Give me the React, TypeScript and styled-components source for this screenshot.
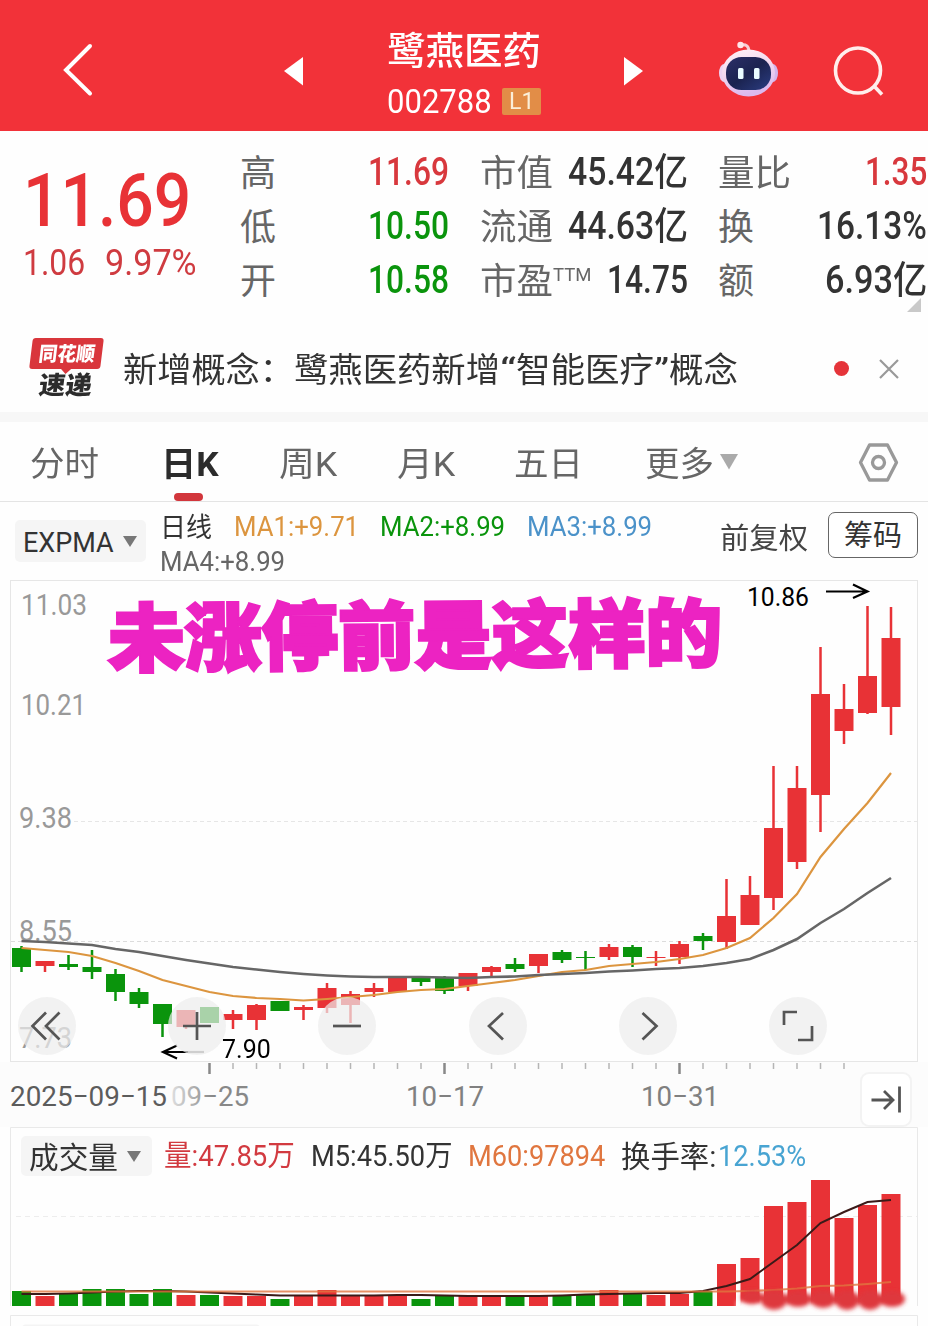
import React, { useLayoutEffect, useRef } from 'react';
import styled, { createGlobalStyle } from 'styled-components';

const RED = '#e83236';
const GREEN = '#0a940c';

const GlobalStyle = createGlobalStyle`
  * { box-sizing: border-box; }
  body { margin: 0; background: #fff; }
`;

const Page = styled.main`
  width: 928px;
  height: 1326px;
  overflow: hidden;
  background: #fefefe;
  color: #333;
  font-family: Roboto, 'Noto Sans CJK SC', sans-serif;
`;

/* ---------- text that keeps a fixed measure ---------- */

const FitBox = styled.span<{ $w: number; $size: number; $color?: string; $weight?: number; $dy?: number }>`
  display: block;
  flex: none;
  width: ${p => p.$w}px;
  height: ${p => p.$size}px;
  line-height: ${p => p.$size}px;
  font-size: ${p => p.$size}px;
  font-weight: ${p => p.$weight ?? 400};
  margin-top: ${p => p.$dy ?? 0}px;
  color: ${p => p.$color ?? 'inherit'};
`;

const FitInner = styled.span`
  display: inline-block;
  white-space: pre;
  transform-origin: 0 50%;
`;

type FitProps = { w: number; size: number; color?: string; weight?: number; dy?: number; children: React.ReactNode };

function Fit({ w, size, color, weight, dy, children }: FitProps) {
  const ref = useRef<HTMLSpanElement>(null);
  useLayoutEffect(() => {
    const el = ref.current;
    if (el && el.offsetWidth) el.style.transform = `scaleX(${w / el.offsetWidth})`;
  }, [w, children]);
  return (
    <FitBox $w={w} $size={size} $color={color} $weight={weight} $dy={dy}>
      <FitInner ref={ref}>{children}</FitInner>
    </FitBox>
  );
}

/* ---------- header ---------- */

const Header = styled.header`
  display: flex;
  align-items: flex-start;
  height: 131px;
  background: #f23239;
  color: #fff;
  padding-left: 60px;
`;

const HeaderIcon = styled.svg<{ $w: number; $h: number; $ml?: number; $mt: number }>`
  flex: none;
  width: ${p => p.$w}px;
  height: ${p => p.$h}px;
  margin-left: ${p => p.$ml ?? 0}px;
  margin-top: ${p => p.$mt}px;
`;

const Title = styled.div`
  width: 154px;
  margin-left: 84px;
  padding-top: 32px;
`;

const CodeRow = styled.div`
  display: flex;
  align-items: center;
  gap: 10px;
  margin-top: 14px;
`;

const Badge = styled.span`
  display: flex;
  align-items: center;
  justify-content: center;
  width: 39px;
  height: 27px;
  border-radius: 2px;
  background: #e28d47;
  color: #fbeed8;
`;

/* ---------- quote ---------- */

const Quote = styled.section`
  position: relative;
  display: flex;
  height: 194px;
  padding-top: 14px;
`;

const Price = styled.div`
  width: 240px;
  flex: none;
  padding: 18px 0 0 23px;
`;

const Change = styled.div`
  display: flex;
  gap: 20px;
  margin-top: 7px;
`;

const Stats = styled.div`
  display: grid;
  grid-template-columns: 209px 208px 209px;
  grid-auto-rows: 54px;
  column-gap: 30.5px;
`;

const Stat = styled.div`
  display: flex;
  align-items: center;
  justify-content: space-between;
`;

const StatLabel = styled.span`
  display: flex;
  align-items: center;
  color: #666;
`;

const Corner = styled.i`
  position: absolute;
  right: 7px;
  bottom: 13px;
  border-style: solid;
  border-width: 0 0 14px 14px;
  border-color: transparent transparent #c9c9c9 transparent;
`;

/* ---------- news ---------- */

const News = styled.section`
  display: flex;
  align-items: center;
  height: 87px;
  padding-left: 28px;
`;

const NewsLogo = styled.div`
  width: 77px;
  height: 62px;
  margin-right: 18px;
`;

const LogoPlate = styled.div`
  position: relative;
  width: 71px;
  height: 31px;
  margin-left: 3px;
  padding: 6px 0 0 8px;
  border-radius: 3px;
  background: #d9363c;
  color: #fff;
  transform: skewX(-7deg);
  &::after {
    content: '';
    position: absolute;
    left: 31px;
    bottom: -5px;
    border-style: solid;
    border-width: 6px 6px 0;
    border-color: #d9363c transparent transparent;
  }
`;

const LogoWord = styled.div`
  margin: 4px 0 0 11px;
  transform: skewX(-7deg);
`;

const NewsLine = styled.div`
  display: flex;
  width: 615px;
`;

const Dot = styled.i`
  width: 15px;
  height: 15px;
  margin-left: 96px;
  border-radius: 50%;
  background: #e5343a;
`;

const Glyph = styled.svg<{ $w: number; $h: number; $ml?: number }>`
  flex: none;
  width: ${p => p.$w}px;
  height: ${p => p.$h}px;
  margin-left: ${p => p.$ml ?? 0}px;
`;

const Band = styled.div`
  height: 10px;
  background: #f7f7f7;
`;

/* ---------- tabs ---------- */

const Tabs = styled.nav`
  display: flex;
  align-items: center;
  height: 80px;
  padding-left: 30px;
  border-bottom: 1px solid #e4e4e4;
  color: #666;
`;

const Tab = styled.div<{ $gap?: number; $active?: boolean }>`
  position: relative;
  margin-left: ${p => p.$gap ?? 0}px;
  padding-top: 4px;
  color: ${p => (p.$active ? '#2c2c2c' : 'inherit')};
  &::after {
    content: '';
    display: ${p => (p.$active ? 'block' : 'none')};
    position: absolute;
    left: 13px;
    bottom: -20px;
    width: 29px;
    height: 8px;
    border-radius: 4px;
    background: #d2363c;
  }
`;

/* ---------- indicator row ---------- */

const Indicators = styled.section`
  display: flex;
  height: 78px;
  padding-left: 15px;
`;

const Picker = styled.div<{ $w: number; $h: number; $mt: number }>`
  display: flex;
  align-items: center;
  flex: none;
  gap: 9px;
  width: ${p => p.$w}px;
  height: ${p => p.$h}px;
  margin-top: ${p => p.$mt}px;
  padding-left: 8px;
  border-radius: 5px;
  background: #f5f5f5;
`;

const Caret = styled.i<{ $w: number; $h: number; $color: string }>`
  width: 0;
  border-style: solid;
  border-width: ${p => p.$h}px ${p => p.$w / 2}px 0;
  border-color: ${p => p.$color} transparent transparent;
`;

const Averages = styled.div`
  display: flex;
  flex-wrap: wrap;
  align-content: flex-start;
  column-gap: 21.5px;
  row-gap: 7px;
  width: 547px;
  margin-left: 14px;
  padding-top: 12px;
`;

const Adjust = styled.div`
  display: flex;
  align-items: center;
  gap: 20px;
  height: 65px;
  padding-top: 1px;
  margin-left: 13px;
`;

const ChipButton = styled.button`
  display: flex;
  align-items: center;
  justify-content: center;
  width: 90px;
  height: 46px;
  margin-top: -1px;
  padding: 0;
  border: 1px solid #666;
  border-radius: 7px;
  background: #fff;
  color: #333;
  font: inherit;
`;

/* ---------- charts ---------- */

const Panel = styled.section<{ $h: number }>`
  position: relative;
  height: ${p => p.$h}px;
`;

const Drawing = styled.svg`
  display: block;
  width: 928px;
  font-family: Roboto, 'Noto Sans CJK SC', sans-serif;
`;

const Slogan = styled.div`
  position: absolute;
  left: 108px;
  top: 21px;
  transform: rotate(-0.5deg);
  -webkit-text-stroke: 3px #ec23c2;
  paint-order: stroke fill;
`;

const LowMark = styled.div`
  position: absolute;
  left: 222px;
  top: 456px;
`;

const ControlBar = styled.div`
  position: absolute;
  left: 18px;
  top: 417px;
  display: flex;
  gap: 92.2px;
`;

const Control = styled.button`
  flex: none;
  width: 58px;
  height: 58px;
  padding: 0;
  border: 0;
  border-radius: 50%;
  background: rgba(236, 236, 236, 0.7);
  svg { display: block; width: 58px; height: 58px; }
`;

const Axis = styled.section`
  position: relative;
  height: 65px;
  background: #fcfcfc;
`;

const JumpButton = styled.button`
  position: absolute;
  left: 860px;
  top: 10px;
  width: 52px;
  height: 55px;
  padding: 0;
  border: 2px solid #f3f3f3;
  border-radius: 9px;
  background: #fff;
  svg { display: block; width: 48px; height: 51px; }
`;

const VolumeHead = styled.div`
  position: absolute;
  left: 21px;
  top: 9px;
  display: flex;
  align-items: center;
`;

const Legend = styled.div`
  display: flex;
  margin-left: 12px;
  gap: 16px;
`;

const Pair = styled.span`
  display: flex;
  gap: 2px;
`;

type Candle = [up: 0 | 1, high: number, top: number, bottom: number, low: number];

const candles: Candle[] = [
  [0, 946, 948, 967, 972], [1, 961, 961, 966, 972], [0, 955, 964, 967, 970], [0, 950, 967, 972, 979],
  [0, 969, 974, 992, 1001], [0, 988, 992, 1004, 1008], [0, 1004, 1004, 1024, 1037], [1, 1010, 1010, 1027, 1029],
  [0, 1007, 1007, 1023, 1023], [1, 1010, 1014, 1020, 1029], [1, 1004, 1005, 1020, 1030], [0, 1001, 1001, 1011, 1011],
  [1, 1005, 1007, 1010, 1020], [1, 983, 988, 1008, 1013], [1, 991, 994, 1005, 1023], [1, 983, 988, 992, 997],
  [1, 977, 977, 992, 992], [0, 977, 977, 982, 986], [0, 976, 977, 991, 994], [1, 973, 973, 986, 991],
  [1, 966, 967, 972, 976], [0, 958, 964, 969, 972], [1, 954, 954, 966, 973], [0, 950, 952, 960, 963],
  [0, 951, 957, 958, 970], [1, 944, 947, 957, 960], [0, 945, 947, 957, 967], [1, 951, 957, 958, 966],
  [1, 941, 944, 957, 964], [0, 933, 936, 941, 950], [1, 879, 916, 942, 949], [1, 876, 895, 925, 925],
  [1, 766, 828, 898, 910], [1, 766, 788, 862, 869], [1, 647, 694, 795, 832], [1, 684, 709, 731, 744],
  [1, 606, 676, 713, 714], [1, 607, 638, 707, 735],
];

const fastLine = [
  948, 950, 952, 956, 963, 971, 980, 986, 992, 996, 998, 999, 1000.5, 999, 997, 995, 992, 990, 989, 986, 983, 980,
  976, 972, 970, 966, 964, 962, 959, 955, 948, 938, 918, 894, 857, 829, 803, 773,
];

const slowLine = [
  941, 942, 943.5, 945, 949, 952, 956, 960, 963.5, 967, 969.5, 972, 974, 975.5, 976.5, 977, 977, 977, 977.5, 978, 977,
  976.5, 975, 974, 973, 971.5, 970.5, 969, 968, 966, 963, 959, 950, 939, 923, 909, 893, 878,
];

const volumeTops = [
  1291, 1296, 1294, 1289, 1289, 1294, 1289, 1295, 1295, 1296, 1296, 1299, 1296, 1290, 1296, 1296, 1295, 1299, 1296,
  1296, 1296, 1295, 1296, 1295, 1294, 1290, 1293, 1295, 1294, 1291, 1264, 1258, 1206, 1202, 1180, 1218, 1205, 1194,
];

const volumeMa5 = [
  1294, 1294, 1293.5, 1292.5, 1291.5, 1291, 1291, 1291.5, 1292.5, 1293.5, 1294.5, 1295.5, 1295.5, 1295.5, 1295.5,
  1295.5, 1295, 1295, 1295.5, 1296, 1296, 1296, 1296, 1295.5, 1294.5, 1294, 1293.5, 1293, 1293, 1291, 1286, 1279,
  1262, 1245, 1223, 1212, 1202, 1200,
];

const volumeMa60 = [...Array(31).fill(1291.5), 1291, 1290, 1288.5, 1286, 1285.5, 1284, 1282];

const xAt = (i: number) => 21.5 + i * 23.5;
const path = (ys: number[]) => ys.map((y, i) => `${i ? 'L' : 'M'}${xAt(i)} ${y}`).join('');

const priceLabels: [string, number, number, number][] = [
  ['11.03', 21, 615, 66], ['10.21', 21, 715, 65], ['9.38', 19, 828, 53], ['8.55', 19, 941, 53], ['7.73', 19, 1048, 53],
];

function PriceChart() {
  return (
    <Panel $h={482}>
      <Drawing height="482" viewBox="0 580 928 482">
        <rect x="10.5" y="580.5" width="907" height="481" fill="#fefefe" stroke="#e6e6e6" />
        <g stroke="#e6e6e6" strokeDasharray="4 3">
          <path d="M74 821.5H917" />
          <path d="M11 941.5H917" stroke="#dcdcdc" />
        </g>
        <g fill="#999" fontSize="29">
          {priceLabels.map(([t, x, y, w]) => (
            <text key={t} x={x} y={y} textLength={w} lengthAdjust="spacingAndGlyphs">{t}</text>
          ))}
        </g>
        {candles.map(([up, high, top, bottom, low], i) => (
          <g key={i} fill={up ? RED : GREEN}>
            <rect x={xAt(i) - 1.25} y={high} width="2.5" height={low - high} />
            <rect x={xAt(i) - 9.5} y={top} width="19" height={bottom - top} />
          </g>
        ))}
        <path d={path(fastLine)} fill="none" stroke="#dc953f" strokeWidth="2.2" />
        <path d={path(slowLine)} fill="none" stroke="#666" strokeWidth="2.6" />
        <text x="747" y="606" fontSize="26" textLength="62" lengthAdjust="spacingAndGlyphs">10.86</text>
        <g fill="none" stroke="#000" strokeWidth="2.2">
          <path d="M826 591.5H867M853 584.5L867.5 591.5L853 598" />
          <path d="M163 1052H188M177 1045.5L163 1052L177 1058.5" />
          <path d="M188 1052H204" stroke="#888" />
        </g>
      </Drawing>
      <Slogan><Fit w={614} size={74} weight={900} color="#ec23c2">未涨停前是这样的</Fit></Slogan>
      <ControlBar>
        {[
          'M28 15.5L14.5 29L28 42.5M41.5 15.5L28 29L41.5 42.5',
          'M15 29H43M29 15V43',
          'M15 29H43',
          'M34 16L20 29L34 42.5',
          'M23.5 16L37.5 29L23.5 42.5',
          'M15 28V15H28M43 29V43H29',
        ].map(d => (
          <Control key={d}>
            <svg viewBox="0 0 58 58" fill="none" stroke="#555" strokeWidth="2.7"><path d={d} /></svg>
          </Control>
        ))}
      </ControlBar>
      <LowMark><Fit w={49} size={26} color="#000">7.90</Fit></LowMark>
    </Panel>
  );
}

function DateAxis() {
  return (
    <Axis>
      <Drawing height="65" viewBox="0 1062 928 65">
        <defs>
          <linearGradient id="fade" x1="172" x2="212" y1="0" y2="0" gradientUnits="userSpaceOnUse">
            <stop offset="0" stopColor="#ddd" />
            <stop offset="1" stopColor="#888" />
          </linearGradient>
        </defs>
        {Array.from({ length: 28 }, (_, k) => k + 8).map(i => {
          const major = i % 10 === 8;
          return (
            <rect key={i} x={xAt(i) - (major ? 1.25 : 0.75)} y="1063" width={major ? 2.5 : 1.5}
              height={major ? 11 : 6} fill={major ? '#888' : '#b5b5b5'} />
          );
        })}
        <g fontSize="28" fill="#808080">
          <text x="10" y="1106" textLength="157" lengthAdjust="spacingAndGlyphs" fill="#5c5c5c">2025−09−15</text>
          <text x="171" y="1106" textLength="78" lengthAdjust="spacingAndGlyphs" fill="url(#fade)">09−25</text>
          <text x="406" y="1106" textLength="78" lengthAdjust="spacingAndGlyphs">10−17</text>
          <text x="641" y="1106" textLength="78" lengthAdjust="spacingAndGlyphs">10−31</text>
        </g>
      </Drawing>
      <JumpButton>
        <svg viewBox="862 1074 48 51" fill="none" stroke="#555" strokeWidth="2.8">
          <path d="M871.5 1100H893M884 1091L893 1100L884 1109M899.5 1086.5V1112.5" />
        </svg>
      </JumpButton>
    </Axis>
  );
}

function VolumeChart() {
  return (
    <Panel $h={199}>
      <Drawing height="199" viewBox="0 1127 928 199">
        <defs>
          <filter id="soft" x="-10%" y="-50%" width="120%" height="200%"><feGaussianBlur stdDeviation="2.2" /></filter>
        </defs>
        <path d="M10.5 1306V1127.5H917.5V1306M10.5 1326V1315.5H917.5V1326" fill="none" stroke="#e9e9e9" />
        <path d="M16 1216.5H917" stroke="#ededed" strokeDasharray="5 4" />
        <rect x="21" y="1324.5" width="240" height="10" rx="5" fill="#f4f4f4" />
        {volumeTops.map((top, i) => (
          <rect key={i} x={xAt(i) - 9.5} y={top} width="19" height={1306 - top} fill={candles[i][0] ? RED : GREEN} />
        ))}
        <path d={path(volumeMa5)} fill="none" stroke="#3a1a18" strokeWidth="2" />
        <path d={path(volumeMa60)} fill="none" stroke="#e07540" strokeOpacity="0.8" strokeWidth="2.2" />
        <rect x="737" y="1301" width="170" height="10" fill="#fefefe" filter="url(#soft)" />
        <g fill="#de383c" filter="url(#soft)">
          <ellipse cx="752" cy="1297" rx="11" ry="7" />
          <ellipse cx="774" cy="1300" rx="13" ry="10" />
          <ellipse cx="798" cy="1299" rx="13" ry="8" />
          <ellipse cx="823" cy="1299" rx="13" ry="9" />
          <ellipse cx="847" cy="1300" rx="12" ry="10" />
          <ellipse cx="870" cy="1300" rx="12" ry="10" />
          <ellipse cx="892" cy="1299" rx="13" ry="8" />
        </g>
      </Drawing>
      <VolumeHead>
        <Picker $w={131} $h={40} $mt={0}>
          <Fit w={89} size={30} dy={3}>成交量</Fit>
          <Caret $w={15} $h={11} $color="#777" />
        </Picker>
        <Legend>
          <Fit w={131} size={29} dy={2} color="#d23a40">量:47.85万</Fit>
          <Fit w={141} size={29} dy={2}>M5:45.50万</Fit>
          <Fit w={137} size={29} dy={2} color="#e0763f">M60:97894</Fit>
          <Pair>
            <Fit w={95} size={30} dy={2}>换手率:</Fit>
            <Fit w={88} size={29} dy={2} color="#48a4d2">12.53%</Fit>
          </Pair>
        </Legend>
      </VolumeHead>
    </Panel>
  );
}

type StatItem = { label: string; lw: number; sup?: boolean; value: string; vw: number; color?: string };

const stats: StatItem[] = [
  { label: '高', lw: 36, value: '11.69', vw: 81, color: '#d8383d' },
  { label: '市值', lw: 73, value: '45.42亿', vw: 120 },
  { label: '量比', lw: 73, value: '1.35', vw: 62, color: '#d8383d' },
  { label: '低', lw: 36, value: '10.50', vw: 81, color: GREEN },
  { label: '流通', lw: 73, value: '44.63亿', vw: 120 },
  { label: '换', lw: 36, value: '16.13%', vw: 110 },
  { label: '开', lw: 36, value: '10.58', vw: 81, color: GREEN },
  { label: '市盈', lw: 73, sup: true, value: '14.75', vw: 81 },
  { label: '额', lw: 36, value: '6.93亿', vw: 102 },
];

export default function App() {
  return (
    <Page>
      <GlobalStyle />
      <Header>
        <HeaderIcon $w={34} $h={56} $mt={42} viewBox="60 42 34 56" fill="none" stroke="#fff" strokeWidth="4" strokeLinecap="round">
          <path d="M90 46L66 70L90 93.5" />
        </HeaderIcon>
        <HeaderIcon $w={20} $h={30} $ml={189} $mt={56} viewBox="283 56 20 30" fill="#fff">
          <path d="M284 71L303 57V85.5Z" />
        </HeaderIcon>
        <Title>
          <Fit w={154} size={38} weight={500}>鹭燕医药</Fit>
          <CodeRow>
            <Fit w={105} size={34} weight={400}>002788</Fit>
            <Badge><Fit w={25} size={24}>L1</Fit></Badge>
          </CodeRow>
        </Title>
        <HeaderIcon $w={20} $h={30} $ml={83} $mt={56} viewBox="624 56 20 30" fill="#fff">
          <path d="M624 57L643 71L624 85.5Z" />
        </HeaderIcon>
        <HeaderIcon $w={64} $h={60} $ml={72} $mt={40} viewBox="716 40 64 60">
          <defs>
            <linearGradient id="shell" x1="0" y1="0" x2="0.3" y2="1">
              <stop offset="0" stopColor="#fff4f8" />
              <stop offset="0.5" stopColor="#f3d9ef" />
              <stop offset="1" stopColor="#dcb9ee" />
            </linearGradient>
            <linearGradient id="visor" x1="0" y1="0" x2="1" y2="1">
              <stop offset="0" stopColor="#2c2f68" />
              <stop offset="0.5" stopColor="#1b2350" />
              <stop offset="1" stopColor="#2b3d82" />
            </linearGradient>
          </defs>
          <path d="M741 45C746 44 749 46 749 52" fill="none" stroke="#f7cfd6" strokeWidth="3" />
          <circle cx="740.5" cy="45" r="3.2" fill="#ffe6ea" />
          <ellipse cx="724" cy="73" rx="5" ry="9" fill="#ecd3f2" />
          <ellipse cx="773" cy="73" rx="5" ry="9" fill="#d4b5ec" />
          <ellipse cx="748.5" cy="73" rx="26.5" ry="23.5" fill="url(#shell)" />
          <rect x="726" y="57" width="45" height="33" rx="15.5" fill="url(#visor)" />
          <rect x="738" y="68" width="5.5" height="11" rx="1.5" fill="#e9fbff" />
          <rect x="754" y="68" width="5.5" height="11" rx="1.5" fill="#e9fbff" />
        </HeaderIcon>
        <HeaderIcon $w={56} $h={56} $ml={52} $mt={43} viewBox="832 43 56 56" fill="none" stroke="#ffeeec" strokeWidth="3.6">
          <circle cx="858" cy="70.5" r="22.5" />
          <path d="M874 86L882 94.5" />
        </HeaderIcon>
      </Header>

      <Quote>
        <Price>
          <Fit w={168} size={75} weight={500} color={RED}>11.69</Fit>
          <Change>
            <Fit w={62} size={36} color="#cf3b40">1.06</Fit>
            <Fit w={92} size={36} color="#cf3b40">9.97%</Fit>
          </Change>
        </Price>
        <Stats>
          {stats.map(s => (
            <Stat key={s.label}>
              <StatLabel>
                <Fit w={s.lw} size={36} dy={4}>{s.label}</Fit>
                {s.sup && <Fit w={38} size={19} dy={-11}>TTM</Fit>}
              </StatLabel>
              <Fit w={s.vw} size={38} weight={500} color={s.color}>{s.value}</Fit>
            </Stat>
          ))}
        </Stats>
        <Corner />
      </Quote>

      <News>
        <NewsLogo>
          <LogoPlate><Fit w={56} size={20} weight={800}>同花顺</Fit></LogoPlate>
          <LogoWord><Fit w={53} size={25} weight={900} color="#2c2c2c">速递</Fit></LogoWord>
        </NewsLogo>
        <NewsLine>
          <Fit w={171} size={34} dy={2}>新增概念：</Fit>
          <Fit w={206} size={34} dy={2}>鹭燕医药新增</Fit>
          <Fit w={16} size={34} dy={2}>“</Fit>
          <Fit w={138} size={34} dy={2}>智能医疗</Fit>
          <Fit w={15} size={34} dy={2}>”</Fit>
          <Fit w={69} size={34} dy={2}>概念</Fit>
        </NewsLine>
        <Dot />
        <Glyph $w={22} $h={22} $ml={29} viewBox="0 0 22 22" fill="none" stroke="#999" strokeWidth="2.2">
          <path d="M2 2L20 20M20 2L2 20" />
        </Glyph>
      </News>
      <Band />

      <Tabs>
        <Tab><Fit w={69} size={34}>分时</Fit></Tab>
        <Tab $gap={62} $active><Fit w={58} size={34} weight={700}>日K</Fit></Tab>
        <Tab $gap={60}><Fit w={58} size={34}>周K</Fit></Tab>
        <Tab $gap={60}><Fit w={58} size={34}>月K</Fit></Tab>
        <Tab $gap={59}><Fit w={69} size={34}>五日</Fit></Tab>
        <Tab $gap={62}><Fit w={69} size={34}>更多</Fit></Tab>
        <Glyph $w={18} $h={16} $ml={6} viewBox="0 0 18 16" fill="#aaa"><path d="M0 0H18L9 15.5Z" /></Glyph>
        <Glyph $w={42} $h={42} $ml={119} viewBox="857 440 42 42" fill="none" stroke="#999" strokeWidth="3.3" strokeLinejoin="round">
          <path d="M869.5 444H887.5L896.5 461.5L887.5 479H869.5L860.5 461.5Z" />
          <circle cx="878.5" cy="461.5" r="6" />
        </Glyph>
      </Tabs>

      <Indicators>
        <Picker $w={131} $h={42} $mt={18}>
          <Fit w={91} size={27} dy={4}>EXPMA</Fit>
          <Caret $w={15} $h={11} $color="#777" />
        </Picker>
        <Averages>
          <Fit w={52} size={27} dy={1}>日线</Fit>
          <Fit w={125} size={27} color="#dc953f">MA1:+9.71</Fit>
          <Fit w={125} size={27} color={GREEN}>MA2:+8.99</Fit>
          <Fit w={125} size={27} color="#4b92c9">MA3:+8.99</Fit>
          <Fit w={125} size={27} color="#666">MA4:+8.99</Fit>
        </Averages>
        <Adjust>
          <Fit w={88} size={29} dy={8} color="#444">前复权</Fit>
          <ChipButton><Fit w={58} size={29} dy={4}>筹码</Fit></ChipButton>
        </Adjust>
      </Indicators>

      <PriceChart />
      <DateAxis />
      <VolumeChart />
    </Page>
  );
}
